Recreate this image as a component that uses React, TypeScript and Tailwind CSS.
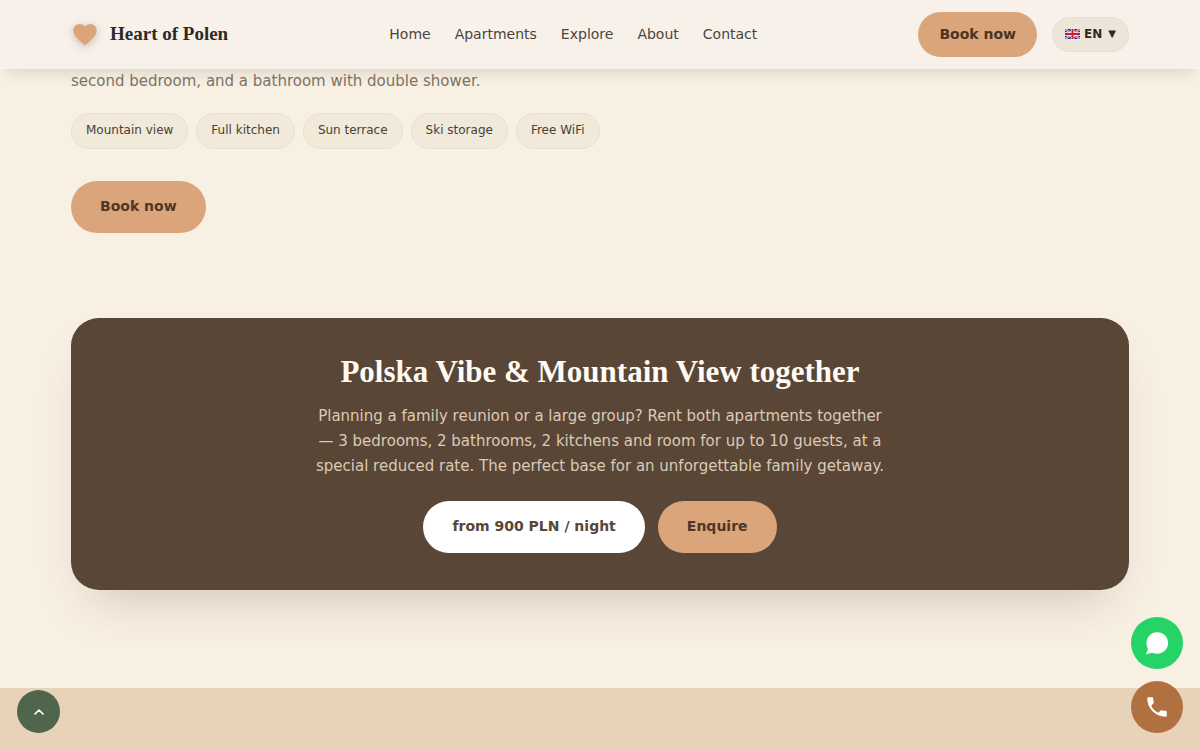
import { useState } from "react";
import { ChevronUp } from "lucide-react";

const NAV_LINKS = [
  { label: "Home", href: "#home" },
  { label: "Apartments", href: "#apartments" },
  { label: "Explore", href: "#explore" },
  { label: "About", href: "#about" },
  { label: "Contact", href: "#contact" },
];

const AMENITIES = [
  "Mountain view",
  "Full kitchen",
  "Sun terrace",
  "Ski storage",
  "Free WiFi",
];

function HeartLogo() {
  return (
    <svg
      viewBox="0 0 24 24"
      className="size-7 fill-[#dba57c] drop-shadow-[0_2px_4px_rgba(60,50,30,0.25)]"
      aria-hidden="true"
    >
      <path d="M12 21 10.500 19.700C5.200 15 2 12 2 8.100 2 5 4.400 2.600 7.500 2.600c1.700 0 3.400.8 4.500 2.100 1.100-1.300 2.800-2.100 4.500-2.100 3.100 0 5.500 2.400 5.500 5.500 0 3.900-3.200 6.900-8.500 11.600z" />
    </svg>
  );
}

function UkFlag() {
  return (
    <svg viewBox="0 0 30 20" className="h-2.5 w-[15px]" aria-hidden="true">
      <path fill="#1b2f9d" d="M0 0h30v20H0z" />
      <path stroke="#fff" strokeWidth="4" d="m0 0 30 20M30 0 0 20" />
      <path stroke="#cf1b2b" strokeWidth="1.8" d="m0 0 30 20M30 0 0 20" />
      <path stroke="#fff" strokeWidth="7" d="M15 0v20M0 10h30" />
      <path stroke="#cf1b2b" strokeWidth="4" d="M15 0v20M0 10h30" />
    </svg>
  );
}

function LanguagePicker() {
  const [lang, setLang] = useState("en");

  return (
    <label className="flex h-[35px] items-center gap-1 rounded-full border border-[#e6dfd3] bg-[#ebe5da] px-3 pb-0.5 text-xs font-bold text-[#2d2a26]">
      <UkFlag />
      <select
        value={lang}
        onChange={(e) => setLang(e.target.value)}
        aria-label="Language"
        className="field-sizing-content cursor-pointer appearance-none bg-transparent pr-0.5 outline-none"
      >
        <option value="en">EN</option>
      </select>
      <span className="text-[10px]" aria-hidden="true">
        ▼
      </span>
    </label>
  );
}

function Header() {
  return (
    <header className="sticky top-0 z-40 bg-[#f8f1ea] px-[71px] shadow-[0_8px_16px_-8px_rgba(70,70,50,0.25)]">
      <div className="flex h-[69px] items-center justify-between">
        <a
          href="#home"
          className="flex items-center gap-[11px] font-['Liberation_Serif',serif] text-[19px] font-bold text-[#2d2a26]"
        >
          <HeartLogo />
          Heart of Polen
        </a>
        <nav className="flex gap-6 pb-0.5 text-sm text-[#4a443d]">
          {NAV_LINKS.map((link) => (
            <a key={link.label} href={link.href}>
              {link.label}
            </a>
          ))}
        </nav>
        <div className="flex items-center gap-[15px]">
          <button
            type="button"
            className="h-[45px] rounded-full bg-[#dba57c] px-[21px] pb-0.5 text-sm font-bold text-[#4a3423]"
          >
            Book now
          </button>
          <LanguagePicker />
        </div>
      </div>
    </header>
  );
}

function ApartmentSummary() {
  return (
    <section>
      <p className="text-[15px] leading-[25px] text-[#7d7468]">
        second bedroom, and a bathroom with double shower.
      </p>
      <ul className="mt-[19px] flex flex-wrap gap-2">
        {AMENITIES.map((amenity) => (
          <li
            key={amenity}
            className="flex h-9 items-center rounded-full border border-[#eadfcf] bg-[#f1e9da] px-3.5 pb-0.5 text-xs text-[#4a4034]"
          >
            {amenity}
          </li>
        ))}
      </ul>
      <button
        type="button"
        className="mt-8 h-[52px] rounded-full bg-[#dba57c] px-[29px] pb-0.5 text-sm font-bold text-[#4f3626]"
      >
        Book now
      </button>
    </section>
  );
}

function TogetherCard() {
  return (
    <section className="mt-[85px] rounded-[28px] bg-[#594636] px-8 py-[37px] text-center shadow-[0_26px_52px_-22px_rgba(80,70,50,0.28)]">
      <h2 className="font-['Liberation_Serif',serif] text-[31px] leading-[34px] font-bold text-[#fffaf3]">
        Polska Vibe &amp; Mountain View together
      </h2>
      <p className="mx-auto mt-[15px] max-w-[580px] text-[15px] leading-[25px] text-[#dccab6]">
        Planning a family reunion or a large group? Rent both apartments
        together — 3 bedrooms, 2 bathrooms, 2 kitchens and room for up to 10
        guests, at a special reduced rate. The perfect base for an unforgettable
        family getaway.
      </p>
      <div className="mt-[22px] flex justify-center gap-[13px]">
        <button
          type="button"
          className="h-[52px] rounded-full bg-white px-[29px] pb-0.5 text-sm font-bold text-[#594636]"
        >
          from 900 PLN / night
        </button>
        <button
          type="button"
          className="h-[52px] rounded-full bg-[#dba57c] px-[29px] pb-0.5 text-sm font-bold text-[#4f3626]"
        >
          Enquire
        </button>
      </div>
    </section>
  );
}

function FloatingActions() {
  return (
    <>
      <a
        href="#home"
        aria-label="Back to top"
        className="fixed bottom-[17px] left-[17px] z-50 flex size-[43px] items-center justify-center rounded-full bg-[#4f654c] text-white"
      >
        <ChevronUp className="size-4" strokeWidth={2.5} />
      </a>
      <div className="fixed right-[17px] bottom-[17px] z-50 flex flex-col gap-3">
        <a
          href="#whatsapp"
          aria-label="WhatsApp"
          className="flex size-[52px] items-center justify-center rounded-full bg-[#25d366] text-white"
        >
          <svg viewBox="0 0 24 24" className="size-[26px]" fill="currentColor" aria-hidden="true">
            <path d="M12.200 2a10 10 0 1 1-4.500 18.900L2.200 22.300c-.4.1-.6-.2-.4-.5 1.100-1.600 1.700-3 1.700-4.900A10 10 0 0 1 12.200 2z" />
          </svg>
        </a>
        <a
          href="#call"
          aria-label="Call us"
          className="flex size-[52px] items-center justify-center rounded-full bg-[#b07040] text-white"
        >
          <svg viewBox="0 0 24 24" className="size-[26px]" fill="currentColor" aria-hidden="true">
            <path d="M6.620 10.790c1.440 2.830 3.760 5.140 6.590 6.590l2.200-2.200c.27-.27.67-.36 1.020-.24 1.120.37 2.330.57 3.570.57.55 0 1 .45 1 1V20c0 .55-.45 1-1 1-9.390 0-17-7.610-17-17 0-.55.45-1 1-1h3.500c.55 0 1 .45 1 1 0 1.250.2 2.450.57 3.570.11.35.03.74-.25 1.020z" />
          </svg>
        </a>
      </div>
    </>
  );
}

export default function App() {
  return (
    <div className="flex min-h-screen flex-col bg-[#f9f0e4] font-['DejaVu_Sans',sans-serif]">
      <Header />
      <main className="px-[71px] pb-[98px]">
        <ApartmentSummary />
        <TogetherCard />
      </main>
      <footer className="flex-1 bg-[#e8d2b9]" />
      <FloatingActions />
    </div>
  );
}
